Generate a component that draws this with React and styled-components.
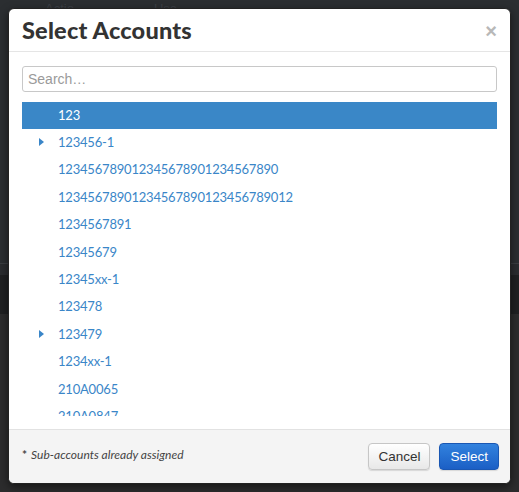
import React from "react";
import styled, { createGlobalStyle } from "styled-components";

const Global = createGlobalStyle`
  html, body { margin: 0; padding: 0; background: #2b2e31; }
  * { box-sizing: border-box; }
`;

const Backdrop = styled.div`
  position: relative;
  width: 519px;
  height: 492px;
  overflow: hidden;
  background: #2b2e31;
`;

/* faint page that sits behind the modal overlay */
const UnderPage = styled.div`
  display: flex;
  flex-direction: column;
  height: 100%;
  font-family: "Liberation Sans", Arial, sans-serif;
  color: #3b3f44;
  font-size: 13px;
`;

const UnderHead = styled.div`
  display: flex;
  gap: 80px;
  padding: 1px 0 0 45px;
  height: 30px;
`;

const UnderBand = styled.div`
  height: ${(p) => p.$h}px;
  background: ${(p) => p.$bg};
  border-top: ${(p) => (p.$line ? "1px solid #3a3d41" : "none")};
`;

const Dialog = styled.div`
  position: absolute;
  left: 8px;
  top: 8px;
  width: 503px;
  height: 476px;
  background: #fff;
  border: 1px solid #222;
  border-radius: 6px;
  overflow: hidden;
  display: flex;
  flex-direction: column;
  box-shadow: 0 3px 9px rgba(0, 0, 0, 0.5);
`;

const Header = styled.div`
  display: flex;
  align-items: center;
  justify-content: space-between;
  height: 43px;
  padding: 0 13px 0 13px;
  border-bottom: 1px solid #e5e5e5;
  flex: none;
`;

const Title = styled.h2`
  margin: 0;
  font-family: Lato, "Noto Sans", sans-serif;
  font-weight: 900;
  font-size: 23.5px;
  color: #333;
  letter-spacing: 0.2px;
`;

const Close = styled.span`
  font-family: "Liberation Sans", Arial, sans-serif;
  font-size: 20px;
  font-weight: 700;
  color: #b8b8b8;
  line-height: 1;
  margin-top: 1px;
`;

const Body = styled.div`
  flex: 1;
  min-height: 0;
  display: flex;
  flex-direction: column;
  gap: 10px;
  padding: 14px 13px 13px 13px;
`;

const Search = styled.input`
  height: 26px;
  width: 100%;
  border: 1px solid #c8c8c8;
  border-radius: 3px;
  padding: 0 5px;
  font-family: "Liberation Sans", Arial, sans-serif;
  font-size: 14px;
  color: #333;
  outline: none;
  &::placeholder { color: #9a9a9a; }
`;

const List = styled.div`
  flex: 1;
  min-height: 0;
  overflow: hidden;
  display: flex;
  flex-direction: column;
`;

const Row = styled.div`
  position: relative;
  flex: none;
  height: 27.4px;
  display: flex;
  align-items: center;
  padding: 0 0 2px 36px;
  font-family: Lato, "Noto Sans", sans-serif;
  font-size: 13px;
  letter-spacing: -0.2px;
  color: ${(p) => (p.$active ? "#fff" : "#3a86c8")};
  background: ${(p) => (p.$active ? "#3a87c7" : "transparent")};
`;

const Caret = styled.svg`
  position: absolute;
  left: 17px;
  top: 50%;
  margin-top: -5px;
  width: 5px;
  height: 8px;
`;

const Footer = styled.div`
  flex: none;
  height: 54px;
  background: #f4f4f4;
  border-top: 1px solid #e2e2e2;
  display: flex;
  align-items: center;
  justify-content: space-between;
  padding: 0 11px 0 13px;
`;

const Note = styled.span`
  font-family: Lato, "Noto Sans", sans-serif;
  font-style: italic;
  font-size: 12px;
  color: #444;
  margin-bottom: 5px;
  b { font-style: normal; font-weight: 700; margin-right: 4px; }
`;

const Actions = styled.div`
  display: flex;
  gap: 9px;
`;

const Button = styled.button`
  height: 27px;
  padding: 0 ${(p) => (p.$primary ? 10 : 9)}px;
  border-radius: 4px;
  font-family: "Liberation Sans", Arial, sans-serif;
  font-size: 13.5px;
  cursor: pointer;
  color: ${(p) => (p.$primary ? "#fff" : "#333")};
  border: 1px solid ${(p) => (p.$primary ? "#1a57b3" : "#c6c6c6")};
  background: ${(p) =>
    p.$primary
      ? "linear-gradient(#3282de, #1b5fc5)"
      : "linear-gradient(#ffffff, #e8e8e8)"};
  box-shadow: 0 1px 1px rgba(0, 0, 0, 0.12);
`;

const accounts = [
  { id: "123", active: true },
  { id: "123456-1", caret: true },
  { id: "123456789012345678901234567890" },
  { id: "12345678901234567890123456789012" },
  { id: "1234567891" },
  { id: "12345679" },
  { id: "12345xx-1" },
  { id: "123478" },
  { id: "123479", caret: true },
  { id: "1234xx-1" },
  { id: "210A0065" },
  { id: "210A0847" },
];

export default function App() {
  return (
    <>
      <Global />
      <Backdrop>
        <UnderPage>
          <UnderHead>
            <span>Actio</span>
            <span>Use</span>
          </UnderHead>
          <UnderBand $h={236} $bg="#2b2e31" />
          <UnderBand $h={12} $bg="#2a2c2f" $line />
          <UnderBand $h={40} $bg="#1f2022" />
          <UnderBand $h={180} $bg="#2c2c2d" />
        </UnderPage>
        <Dialog>
          <Header>
            <Title>Select Accounts</Title>
            <Close>×</Close>
          </Header>
          <Body>
            <Search placeholder="Search…" />
            <List>
              {accounts.map((a) => (
                <Row key={a.id} $active={a.active}>
                  {a.caret && (
                    <Caret viewBox="0 0 5 8">
                      <path d="M0 0 L5 4 L0 8 Z" fill="#3a86c8" />
                    </Caret>
                  )}
                  {a.id}
                </Row>
              ))}
            </List>
          </Body>
          <Footer>
            <Note>
              <b>*</b>Sub-accounts already assigned
            </Note>
            <Actions>
              <Button>Cancel</Button>
              <Button $primary>Select</Button>
            </Actions>
          </Footer>
        </Dialog>
      </Backdrop>
    </>
  );
}
